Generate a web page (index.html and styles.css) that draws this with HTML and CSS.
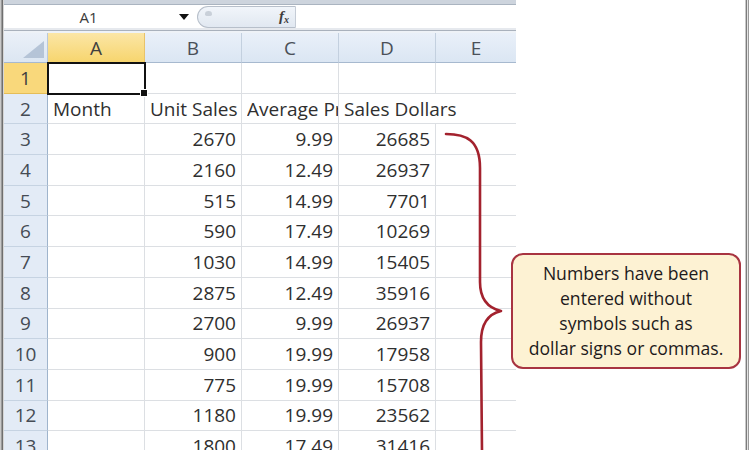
FILE: index.html
```html
<!DOCTYPE html>
<html lang="en">
<head>
<meta charset="utf-8">
<title>Sales sheet</title>
<link rel="stylesheet" href="styles.css">
</head>
<body>
<div class="app">
  <div class="frame-left"></div>
  <div class="excel">
    <div class="top-band"></div>
    <div class="formula-row">
      <div class="name-box">
        <span class="name">A1</span>
        <span class="drop"></span>
      </div>
      <div class="fx-pill">
        <span class="knob"></span>
        <span class="fx">f<sub>x</sub></span>
      </div>
      <div class="formula-input"></div>
    </div>
    <div class="sep"></div>
    <div class="grid">
      <div class="corner"><span class="tri"></span></div>
      <div class="ch sel">A</div><div class="ch">B</div><div class="ch">C</div><div class="ch">D</div><div class="ch last">E</div>

      <div class="rh sel">1</div><div class="c active"></div><div class="c"></div><div class="c"></div><div class="c"></div><div class="c e"></div>
      <div class="rh">2</div><div class="c">Month</div><div class="c">Unit Sales</div><div class="c clip"><span class="clipped">Average Price</span></div><div class="c over">Sales Dollars</div><div class="c e"></div>
      <div class="rh">3</div><div class="c"></div><div class="c n">2670</div><div class="c n">9.99</div><div class="c n">26685</div><div class="c e"></div>
      <div class="rh">4</div><div class="c"></div><div class="c n">2160</div><div class="c n">12.49</div><div class="c n">26937</div><div class="c e"></div>
      <div class="rh">5</div><div class="c"></div><div class="c n">515</div><div class="c n">14.99</div><div class="c n">7701</div><div class="c e"></div>
      <div class="rh">6</div><div class="c"></div><div class="c n">590</div><div class="c n">17.49</div><div class="c n">10269</div><div class="c e"></div>
      <div class="rh">7</div><div class="c"></div><div class="c n">1030</div><div class="c n">14.99</div><div class="c n">15405</div><div class="c e"></div>
      <div class="rh">8</div><div class="c"></div><div class="c n">2875</div><div class="c n">12.49</div><div class="c n">35916</div><div class="c e"></div>
      <div class="rh">9</div><div class="c"></div><div class="c n">2700</div><div class="c n">9.99</div><div class="c n">26937</div><div class="c e"></div>
      <div class="rh">10</div><div class="c"></div><div class="c n">900</div><div class="c n">19.99</div><div class="c n">17958</div><div class="c e"></div>
      <div class="rh">11</div><div class="c"></div><div class="c n">775</div><div class="c n">19.99</div><div class="c n">15708</div><div class="c e"></div>
      <div class="rh">12</div><div class="c"></div><div class="c n">1180</div><div class="c n">19.99</div><div class="c n">23562</div><div class="c e"></div>
      <div class="rh">13</div><div class="c"></div><div class="c n">1800</div><div class="c n">17.49</div><div class="c n">31416</div><div class="c e"></div>
    </div>
  </div>
  <div class="side"></div>
  <div class="frame-right"></div>
</div>

<svg class="brace" width="750" height="450" viewBox="0 0 750 450" aria-hidden="true">
  <path d="M446,134 C466,134 480,140 480,168 L480,282 C480,300 488,308 501,311 C488,314 481,324 481,342 L482,452" fill="none" stroke="#a3222e" stroke-width="2.6" stroke-linecap="round" stroke-linejoin="round"/>
</svg>

<div class="callout">
  <p>Numbers have been<br>entered without<br>symbols such as<br>dollar signs or commas.</p>
</div>
</body>
</html>
```

FILE: styles.css
```css
* { box-sizing: border-box; }

html, body {
  margin: 0;
  padding: 0;
}

body {
  width: 750px;
  height: 450px;
  overflow: hidden;
  position: relative;
  background: #ffffff;
  font-family: "Open Sans", "Noto Sans", sans-serif;
}

.app {
  display: flex;
  height: 450px;
}

.frame-left {
  width: 4px;
  flex: none;
  background: linear-gradient(to right, #c9c9c9 0 1px, #9a9a9a 1px 2px, #6f6f6f 2px 3px, #d6d6d6 3px 4px);
}

.excel {
  width: 512px;
  flex: none;
  display: flex;
  flex-direction: column;
  min-height: 0;
}

.top-band {
  flex: none;
  height: 5px;
  background: #cdd4dd;
  border-bottom: 1px solid #aab4c0;
}

.formula-row {
  flex: none;
  height: 23px;
  display: flex;
  align-items: center;
  background: #ffffff;
}

.name-box {
  width: 193px;
  height: 23px;
  display: flex;
  align-items: center;
}

.name {
  flex: 1;
  text-align: center;
  font-size: 15px;
  color: #3a3a3a;
  padding-right: 6px;
}

.drop {
  width: 0;
  height: 0;
  border-left: 5px solid transparent;
  border-right: 5px solid transparent;
  border-top: 6px solid #111;
  margin-right: 8px;
}

.fx-pill {
  width: 99px;
  height: 22px;
  border: 1px solid #b7bfca;
  border-right-color: #c5ccd6;
  border-radius: 12px 0 0 12px;
  background: linear-gradient(to bottom, #f1f5fa, #e1e8f1);
  display: flex;
  align-items: center;
  justify-content: space-between;
  padding: 0 6px 0 7px;
}

.knob {
  width: 7px;
  height: 5px;
  border-radius: 4px 4px 2px 2px;
  background: #c9d0d9;
  margin-top: -6px;
}

.fx {
  font-family: "Liberation Serif", "DejaVu Serif", serif;
  font-style: italic;
  font-weight: bold;
  font-size: 15px;
  color: #3d3d3d;
  line-height: 1;
}

.fx sub {
  font-size: 10px;
  vertical-align: -2px;
}

.formula-input {
  flex: 1;
  height: 23px;
}

.sep {
  flex: none;
  height: 5px;
  background: linear-gradient(to bottom, #e6e9ee 0 2px, #a9b1bc 2px 3px, #eef2f7 3px);
}

.grid {
  flex: none;
  display: grid;
  grid-template-columns: 44px 97px 97px 97px 97px 80px;
  grid-template-rows: 30px;
  grid-auto-rows: 30.7px;
  font-size: 19px;
  color: #2f2f2f;
}

.corner {
  background: linear-gradient(to bottom, #eaf0f8, #dce6f2);
  border-right: 1px solid #b9c8da;
  border-bottom: 1px solid #a7b9cf;
  display: flex;
  align-items: flex-end;
  justify-content: flex-end;
  padding: 0 3px 4px 0;
}

.tri {
  width: 21px;
  height: 17px;
  background: #b5c4d7;
  clip-path: polygon(100% 0, 100% 100%, 0 100%);
}

.ch {
  display: flex;
  align-items: center;
  justify-content: center;
  background: linear-gradient(to bottom, #e9f0f9, #dbe6f3);
  border-right: 1px solid #c3d0df;
  border-bottom: 1px solid #a7b9cf;
  color: #4a5058;
  font-size: 19px;
}

.ch.last { border-right: none; }

.ch.sel {
  background: linear-gradient(to bottom, #fbe6a6, #f7d56e);
  border-bottom: 1px solid #e7b43b;
  border-right-color: #e8c36a;
  color: #3f3f3f;
}

.rh {
  display: flex;
  align-items: center;
  justify-content: center;
  background: #e3ebf6;
  border-right: 1px solid #9fb4cc;
  border-bottom: 1px solid #c6d3e2;
  color: #454b54;
  font-size: 19px;
}

.rh.sel {
  background: #f9d87b;
  border-bottom-color: #e5bd58;
  border-right-color: #e2b649;
  color: #3f3f3f;
}

.c {
  display: flex;
  align-items: center;
  padding: 0 5px;
  border-right: 1px solid #dcdfe3;
  border-bottom: 1px solid #dcdfe3;
  white-space: nowrap;
  overflow: hidden;
  background: #ffffff;
}

.c.n { justify-content: flex-end; }

.c.e { border-right: none; }

.c.clip { padding-right: 0; }

.clipped {
  display: block;
  overflow: hidden;
  width: 100%;
}

.c.over {
  overflow: visible;
  border-right: none;
  position: relative;
  z-index: 1;
  background: transparent;
}

.c.active {
  position: relative;
  z-index: 2;
  overflow: visible;
  outline: 2.5px solid #111;
  outline-offset: -1px;
}

.c.active::after {
  content: "";
  position: absolute;
  right: -4px;
  bottom: -4px;
  width: 6px;
  height: 6px;
  background: #111;
  border: 1px solid #fff;
}

.side {
  flex: 1;
  background: #ffffff;
}

.frame-right {
  width: 5px;
  flex: none;
  background: linear-gradient(to right, #c8c8c8 0 1px, #7c7c7c 1px 2px, #e4e4e4 2px 3px, #9a9a9a 3px 4px, #ffffff 4px);
}

.brace {
  position: absolute;
  left: 0;
  top: 0;
  pointer-events: none;
}

.callout {
  position: absolute;
  left: 511px;
  top: 253px;
  width: 230px;
  height: 116px;
  border: 2px solid #a83441;
  border-radius: 12px;
  background: #fdf2d3;
  display: flex;
  align-items: center;
  justify-content: center;
  padding: 0 4px;
}

.callout p {
  margin: 0;
  text-align: center;
  font-family: "Open Sans", "Noto Sans", sans-serif;
  font-size: 17.6px;
  line-height: 24.8px;
  color: #1e1a1b;
  white-space: nowrap;
}
```
